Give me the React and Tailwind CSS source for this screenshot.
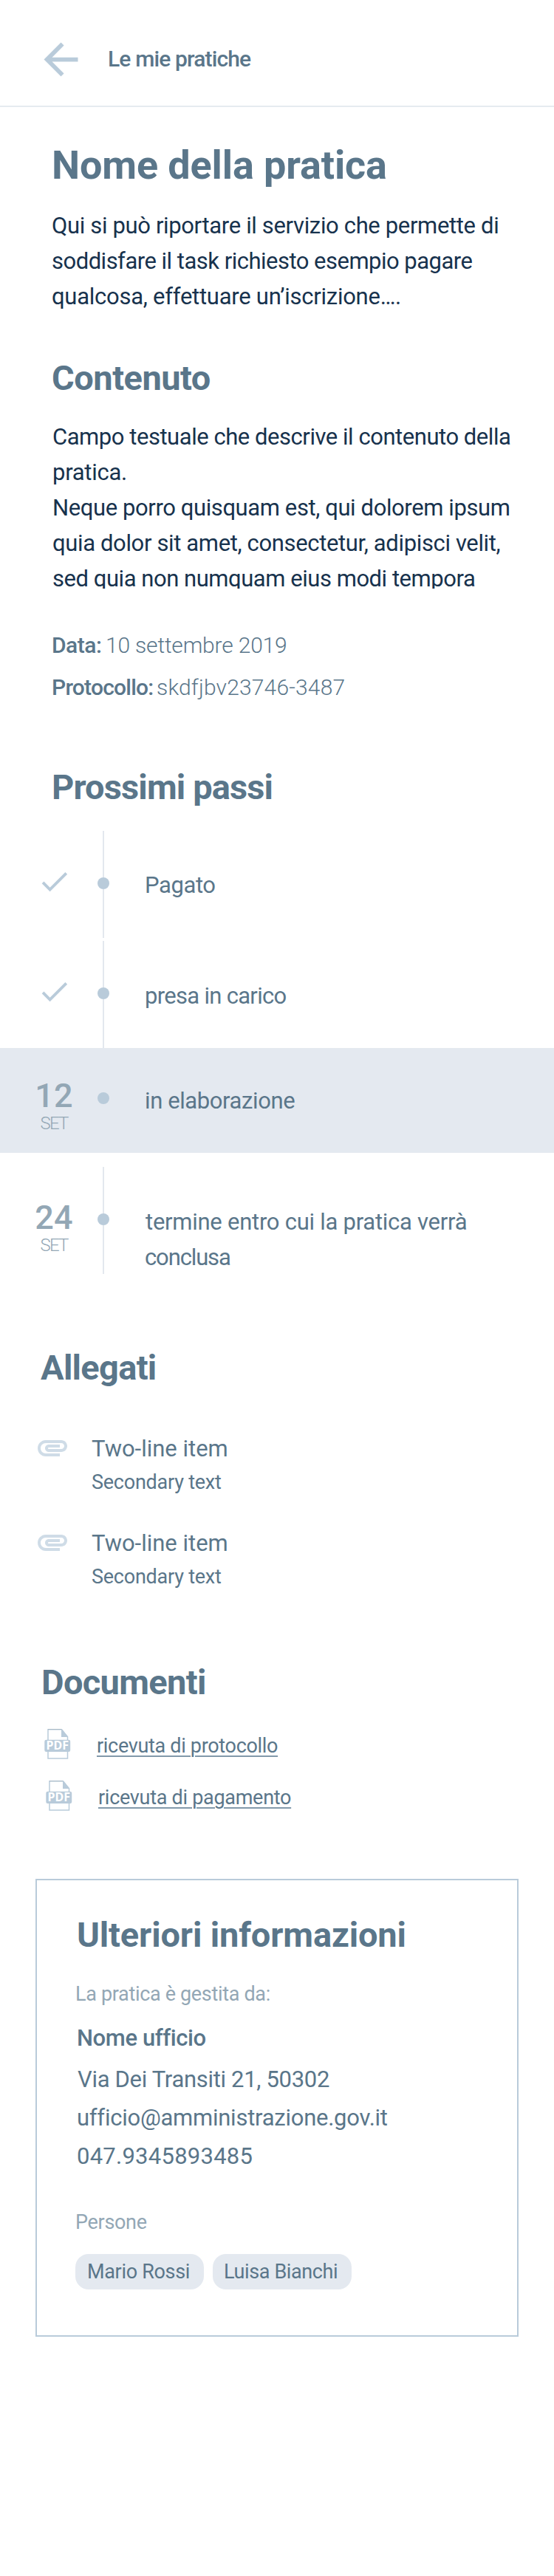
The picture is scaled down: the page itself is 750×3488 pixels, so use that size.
import React from "react";

const H2 = "text-[47px] leading-[56px] font-bold whitespace-nowrap";

function BackIcon() {
  return (
    <svg className="h-[69px] w-[69px] shrink-0 fill-[#b9cbda]" viewBox="0 0 24 24">
      <path d="M20 11H7.83l5.59-5.59L12 4l-8 8 8 8 1.41-1.41L7.83 13H20v-2z" />
    </svg>
  );
}

function CheckIcon() {
  return (
    <svg className="ml-[50px] mt-[45px] h-[47px] w-[47px] fill-[#b9cbda]" viewBox="0 0 24 24">
      <path d="M9 16.17L4.83 12l-1.42 1.41L9 19 21 7l-1.41-1.41z" />
    </svg>
  );
}

function ClipIcon() {
  return (
    <svg className="h-12 w-12 shrink-0 fill-[#cfdce7]" viewBox="0 0 24 24">
      <path d="M2 12.5C2 9.46 4.46 7 7.5 7H18c2.21 0 4 1.79 4 4s-1.79 4-4 4H9.5C8.12 15 7 13.88 7 12.5S8.12 10 9.5 10H17v2H9.41c-.55 0-.55 1 0 1H18c1.1 0 2-.9 2-2s-.9-2-2-2H7.5C5.57 9 4 10.57 4 12.5S5.57 16 7.5 16H17v2H7.5C4.46 18 2 15.54 2 12.5z" />
    </svg>
  );
}

function PdfIcon() {
  return (
    <svg className="h-[42px] w-9 shrink-0" viewBox="0 0 36 42">
      <path d="M5 1.75h18.5l8 10V41H5z" fill="#fff" stroke="#b9cbda" strokeWidth="1.5" />
      <path d="M5 1.5h18" stroke="#a9b9c6" strokeWidth="1" />
      <path d="M23 1l9.3 11H23z" fill="#b9cbda" />
      <rect x="0.3" y="15.7" width="34.9" height="16.3" rx="2.2" fill="#b9cbda" />
      <text
        x="2.6"
        y="29.3"
        textLength="30.4"
        lengthAdjust="spacingAndGlyphs"
        className="fill-white font-['Noto_Sans',sans-serif] text-[15.5px] font-bold"
      >
        PDF
      </text>
    </svg>
  );
}

function DateMark({ day, className }) {
  return (
    <div className={`ml-[47px] flex w-[52px] flex-col items-center text-[#93a7b5] ${className}`}>
      <span className="text-[45px] leading-[48px] font-medium tracking-[0.2px]">{day}</span>
      <span className="mt-px text-[24px] leading-6 font-light tracking-[-1.8px]">SET</span>
    </div>
  );
}

function Step({ mark, children, className = "h-[145px]", dot = "h-[63px]", line = "bg-[#e3e8ee]", text }) {
  return (
    <li className={`flex ${className}`}>
      <div className="w-[132px] shrink-0">{mark}</div>
      <div className="flex w-4 shrink-0 flex-col items-center">
        <span className={`w-0.5 shrink-0 ${dot} ${line}`} />
        <span className="h-4 w-4 shrink-0 rounded-full bg-[#b9cbda]" />
        <span className={`w-0.5 grow ${line}`} />
      </div>
      <div className={`ml-12 text-[31px] leading-[48px] whitespace-nowrap ${text}`}>{children}</div>
    </li>
  );
}

function Attachment() {
  return (
    <li className="flex h-32 pl-[47px]">
      <ClipIcon />
      <div className="ml-[29px] pt-0.5">
        <p className="text-[31px] leading-[48px]">Two-line item</p>
        <p className="mt-px text-[27px] leading-10 tracking-[-0.24px]">Secondary text</p>
      </div>
    </li>
  );
}

export default function App() {
  return (
    <div className="min-h-[3488px] w-[750px] bg-white font-['Roboto','Liberation_Sans',sans-serif] text-[#5a768a]">
      <header className="flex h-[145px] border-b-2 border-[#e5ebf0] pt-[46px] pl-[48px]">
        <BackIcon />
        <span className="mt-[10px] ml-[29px] text-[30px] leading-[48px] font-medium tracking-[-0.86px]">
          Le mie pratiche
        </span>
      </header>

      <section className="pl-[70px]">
        <h1 className="mt-[47px] text-[54px] leading-[64px] font-bold tracking-[-0.13px]">Nome della pratica</h1>
        <p className="mt-[26px] text-[31px] leading-[48px] whitespace-nowrap text-[#17324d]">
          <span className="block tracking-[-0.35px]">Qui si può riportare il servizio che permette di</span>
          <span className="block tracking-[-0.51px]">soddisfare il task richiesto esempio pagare</span>
          <span className="block tracking-[-0.26px]">qualcosa, effettuare un’iscrizione….</span>
        </p>
      </section>

      <section className="pl-[70px]">
        <h2 className={`mt-[58px] tracking-[-0.5px] ${H2}`}>Contenuto</h2>
        <div className="mt-7 h-[229px] overflow-hidden pl-px text-[31px] leading-[48px] whitespace-nowrap text-[#17324d]">
          <p className="tracking-[-0.46px]">Campo testuale che descrive il contenuto della</p>
          <p className="tracking-[-0.28px]">pratica.</p>
          <p className="tracking-[-0.4px]">Neque porro quisquam est, qui dolorem ipsum</p>
          <p className="tracking-[-0.36px]">quia dolor sit amet, consectetur, adipisci velit,</p>
          <p className="tracking-[-0.46px]">sed quia non numquam eius modi tempora</p>
        </div>
        <dl className="mt-12 text-[30px] leading-[57px] whitespace-nowrap">
          <div className="flex">
            <dt className="w-[73px] font-medium tracking-[-0.5px]">Data:</dt>
            <dd className="font-light tracking-[-0.18px]">10 settembre 2019</dd>
          </div>
          <div className="flex">
            <dt className="w-[142px] font-medium tracking-[-0.77px]">Protocollo:</dt>
            <dd className="font-light tracking-[0.17px]">skdfjbv23746-3487</dd>
          </div>
        </dl>
      </section>

      <section>
        <h2 className={`mt-[79px] pl-[70px] tracking-[-0.86px] ${H2}`}>Prossimi passi</h2>
        <ol className="mt-[31px]">
          <Step mark={<CheckIcon />} text="pt-[50px] tracking-[-0.4px]">
            Pagato
          </Step>
          <Step mark={<CheckIcon />} className="mt-1 h-[145px]" text="pt-[51px] tracking-[-0.7px]">
            presa in carico
          </Step>
          <Step
            mark={<DateMark day="12" className="pt-[41px]" />}
            className="h-[142px] bg-[#e4e9f0]"
            dot="h-[60px]"
            line="bg-[#e4e9f0]"
            text="pt-[48px] tracking-[-0.4px]"
          >
            in elaborazione
          </Step>
          <Step mark={<DateMark day="24" className="pt-[45px]" />} className="mt-[19px] h-[145px]" text="pt-[51px]">
            <span className="block pl-px tracking-[-0.26px]">termine entro cui la pratica verrà</span>
            <span className="block tracking-[-1.13px]">conclusa</span>
          </Step>
        </ol>
      </section>

      <section>
        <h2 className={`mt-[99px] pl-[55px] tracking-[-0.7px] ${H2}`}>Allegati</h2>
        <ul className="mt-14">
          <Attachment />
          <Attachment />
        </ul>
      </section>

      <section>
        <h2 className={`mt-[58px] pl-[56px] tracking-[-0.65px] ${H2}`}>Documenti</h2>
        <ul className="mt-[34px] text-[27px] leading-10">
          <li className="flex h-[70px] pl-[60px]">
            <PdfIcon />
            <a className="mt-1 ml-[35px] self-start tracking-[-0.32px] underline decoration-[#8299aa] decoration-2 underline-offset-4">
              ricevuta di protocollo
            </a>
          </li>
          <li className="flex h-[70px] pl-[62px]">
            <PdfIcon />
            <a className="mt-1 ml-[35px] self-start tracking-[-0.29px] underline decoration-[#8299aa] decoration-2 underline-offset-4">
              ricevuta di pagamento
            </a>
          </li>
        </ul>
      </section>

      <section className="mx-12 mt-16 h-[620px] border-2 border-[#b9cbda] pt-[46px] pl-[52px]">
        <h2 className={`pl-0.5 tracking-[-0.15px] ${H2}`}>Ulteriori informazioni</h2>
        <p className="mt-8 text-[27px] leading-10 tracking-[-0.33px] text-[#93a7b5]">La pratica è gestita da:</p>
        <p className="mt-4 pl-0.5 text-[31px] leading-[48px] font-medium tracking-[-0.4px]">Nome ufficio</p>
        <address className="mt-[6px] pl-px text-[31px] leading-[52px] not-italic">
          <span className="block pl-0.5 tracking-[-0.31px]">Via Dei Transiti 21, 50302</span>
          <span className="block pl-px tracking-[-0.25px]">ufficio@amministrazione.gov.it</span>
          <span className="block pl-px tracking-[0.25px]">047.9345893485</span>
        </address>
        <p className="mt-[43px] text-[27px] leading-10 tracking-[-0.31px] text-[#93a7b5]">Persone</p>
        <div className="mt-[23px] flex gap-3 text-[27px] leading-[48px] whitespace-nowrap">
          <span className="h-12 w-[174px] rounded-[18px] bg-[#e4e9f0] pl-4 tracking-[-0.32px]">Mario Rossi</span>
          <span className="h-12 w-[188px] rounded-[18px] bg-[#e4e9f0] pl-[15px] tracking-[-0.39px]">Luisa Bianchi</span>
        </div>
      </section>
    </div>
  );
}
